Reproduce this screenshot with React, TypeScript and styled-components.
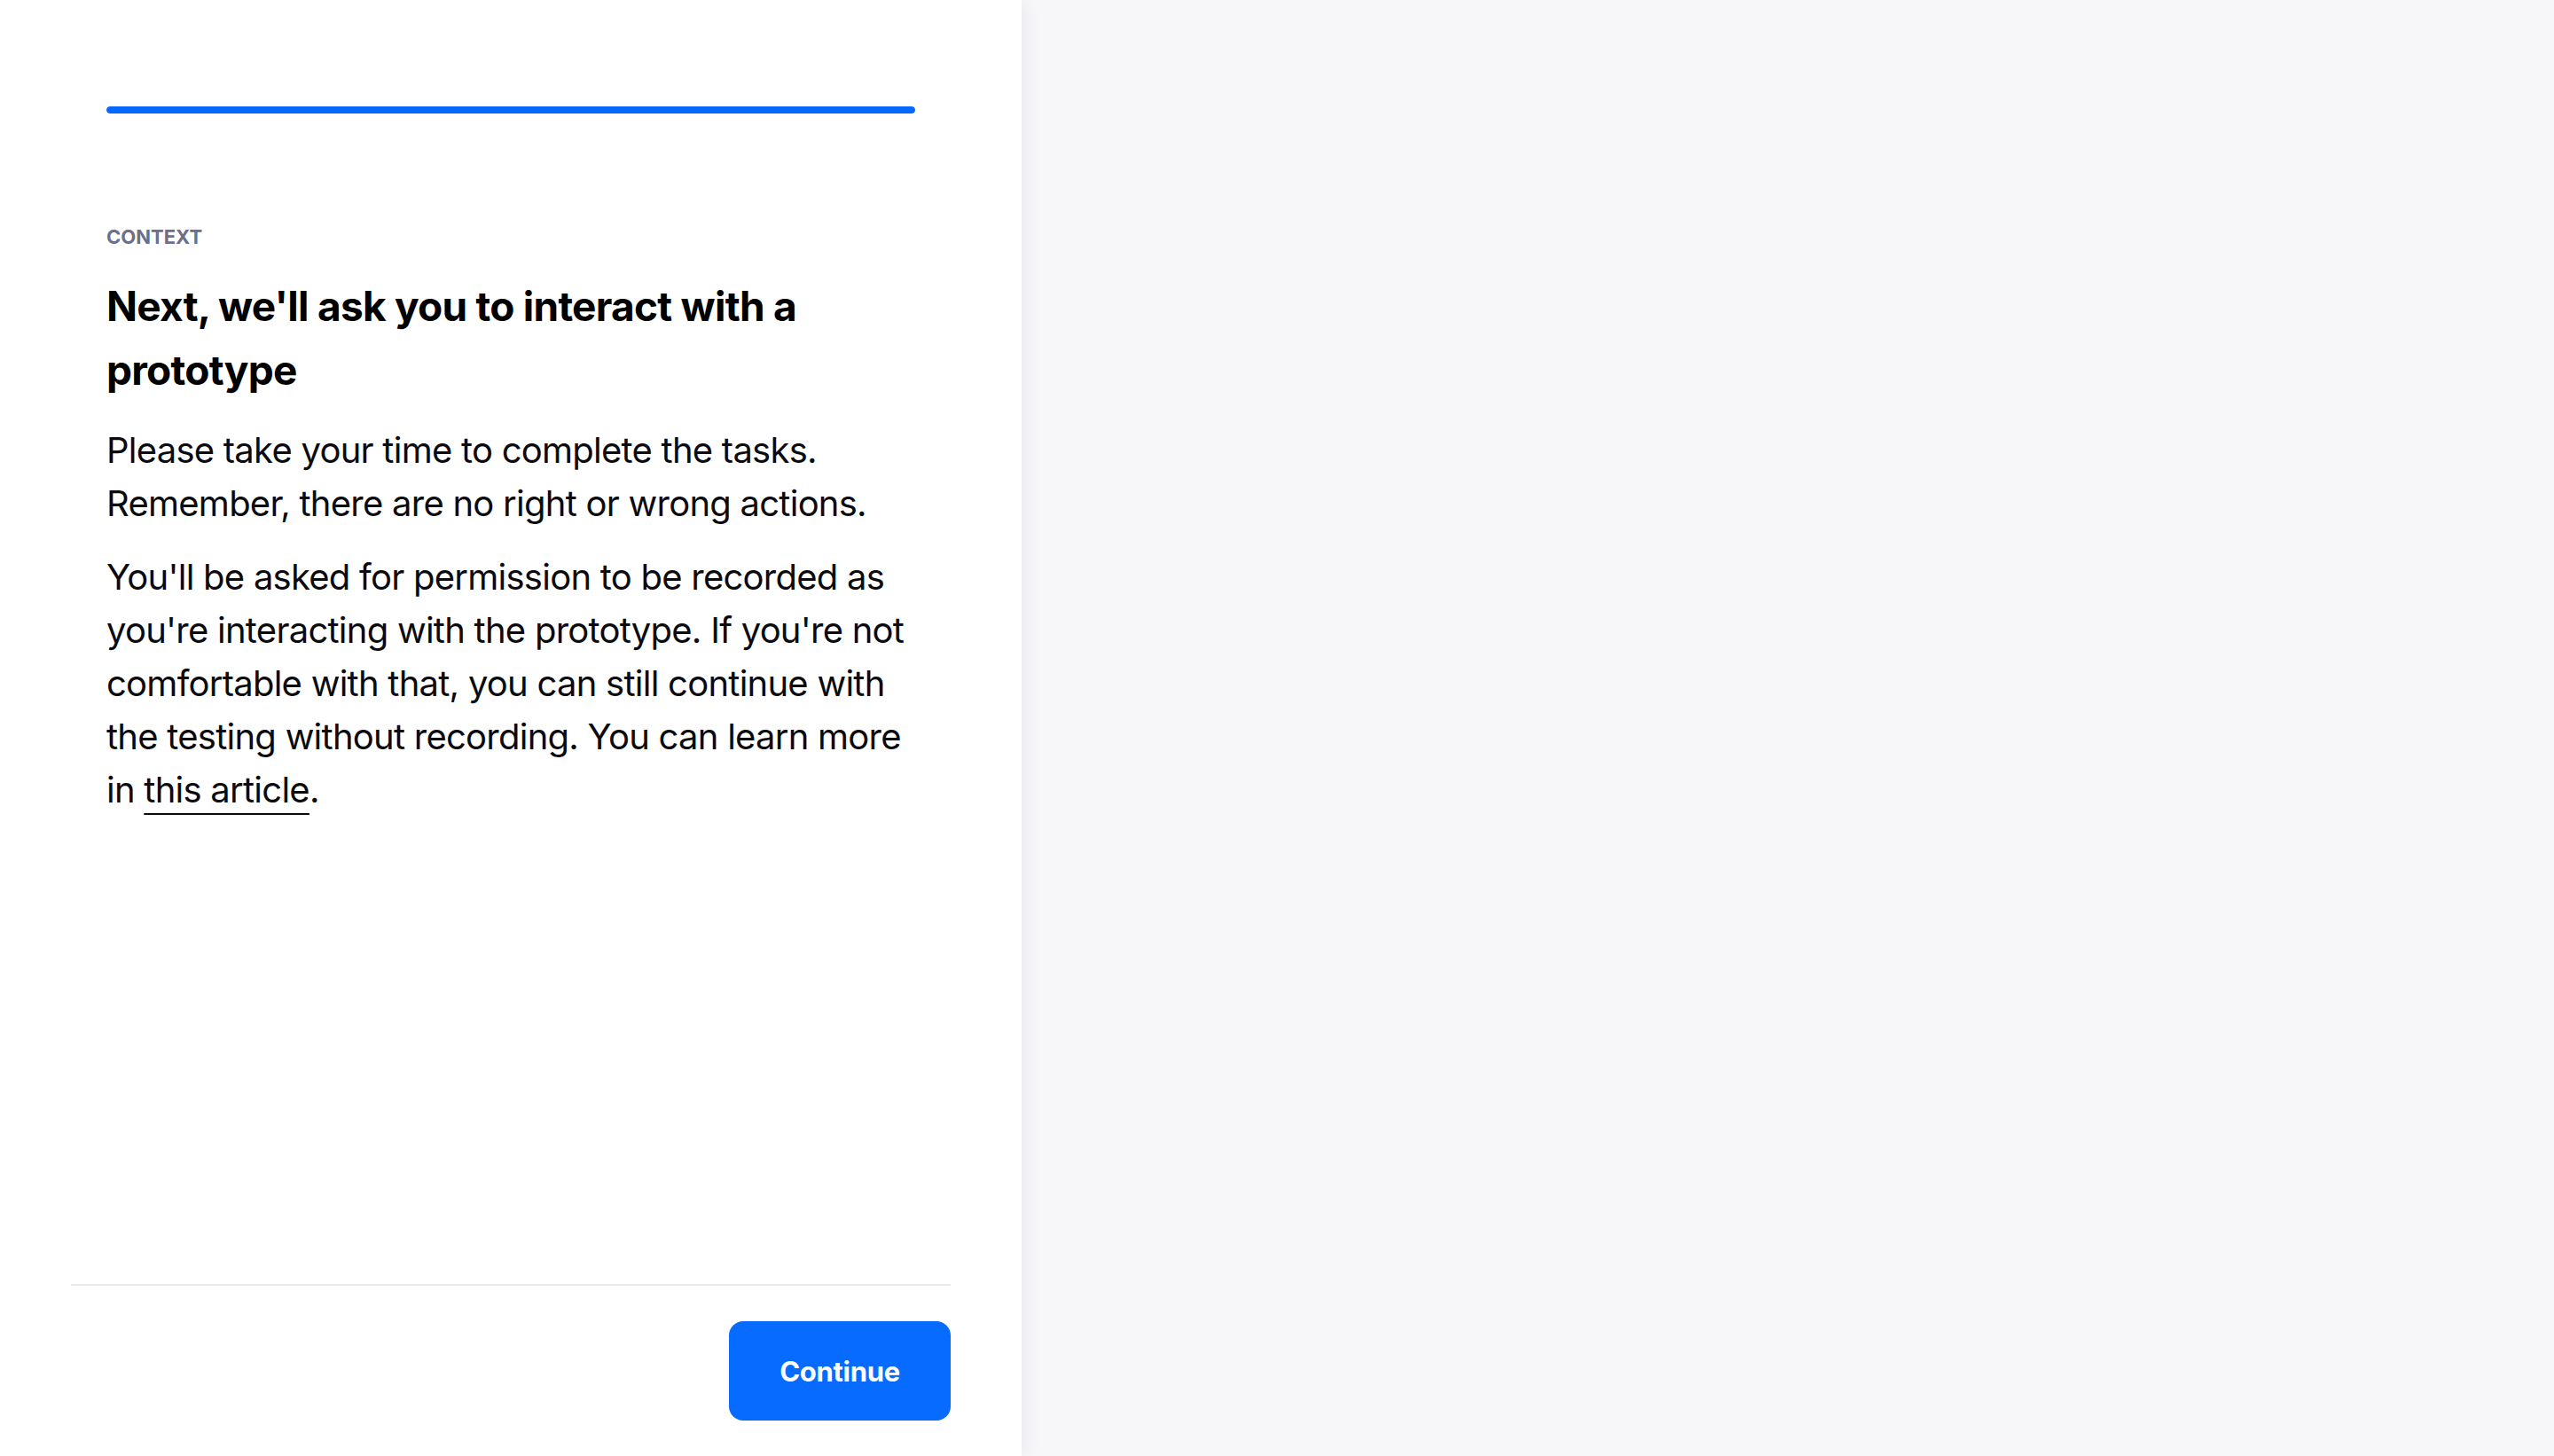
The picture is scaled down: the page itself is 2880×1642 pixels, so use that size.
import React from "react";
import styled, { createGlobalStyle } from "styled-components";

const Global = createGlobalStyle`
  html, body { margin: 0; padding: 0; height: 100%; }
  body { font-family: Inter, "Noto Sans", sans-serif; background: #f7f7f9; }
  #root { height: 100%; }
`;

const Screen = styled.div`
  display: flex;
  width: 2880px;
  height: 1642px;
  background: #f7f7f9;
  overflow: hidden;
`;

const Panel = styled.section`
  width: 1152px;
  flex: none;
  background: #ffffff;
  display: flex;
  flex-direction: column;
  padding: 120px 80px 40px;
  box-sizing: border-box;
  position: relative;
  z-index: 1;
  box-shadow: 4px 0 18px rgba(20, 20, 60, 0.06);
`;

const Preview = styled.div`
  flex: 1;
  background: #f7f7f9;
`;

const Content = styled.div`
  flex: 1;
  padding: 0 40px;
  display: flex;
  flex-direction: column;
`;

const Progress = styled.div`
  height: 8px;
  border-radius: 4px;
  background: #e6e8f0;
  overflow: hidden;
  margin-bottom: 123px;
`;

const ProgressFill = styled.div`
  height: 100%;
  border-radius: 4px;
  background: #0568fd;
`;

const Eyebrow = styled.div`
  font-size: 22px;
  line-height: 32px;
  font-weight: 700;
  color: #6b6f8a;
  letter-spacing: 0;
  text-transform: uppercase;
  margin-bottom: 26px;
`;

const Heading = styled.h1`
  margin: 0 0 25px;
  font-size: 46px;
  line-height: 72px;
  font-weight: 700;
  color: #000;
  letter-spacing: -0.75px;
`;

const Paragraph = styled.p`
  margin: 0 0 23px;
  font-size: 40px;
  line-height: 60px;
  font-weight: 400;
  color: #0b0b0f;
  letter-spacing: -0.75px;
`;

const Link = styled.a`
  color: inherit;
  text-decoration: underline;
  text-decoration-thickness: 2px;
  text-underline-offset: 12px;
`;

const Footer = styled.footer`
  border-top: 2px solid #e8e8ee;
  padding-top: 40px;
  display: flex;
  justify-content: flex-end;
`;

const Button = styled.button`
  width: 250px;
  height: 112px;
  border: none;
  border-radius: 16px;
  background: #066bfe;
  color: #fff;
  font-family: Inter, sans-serif;
  font-size: 31px;
  font-weight: 700;
  letter-spacing: -0.3px;
  cursor: pointer;
`;

export default function App() {
  const progress = 100;
  return (
    <>
      <Global />
      <Screen>
        <Panel>
          <Content>
            <Progress>
              <ProgressFill style={{ width: `${progress}%` }} />
            </Progress>
            <Eyebrow>Context</Eyebrow>
            <Heading>Next, we'll ask you to interact with a prototype</Heading>
            <Paragraph>
              Please take your time to complete the tasks. Remember, there are no right or wrong actions.
            </Paragraph>
            <Paragraph>
              You'll be asked for permission to be recorded as you're interacting with the prototype. If
              you're not comfortable with that, you can still continue with the testing without recording.
              You can learn more in <Link href="#">this article</Link>.
            </Paragraph>
          </Content>
          <Footer>
            <Button>Continue</Button>
          </Footer>
        </Panel>
        <Preview />
      </Screen>
    </>
  );
}
